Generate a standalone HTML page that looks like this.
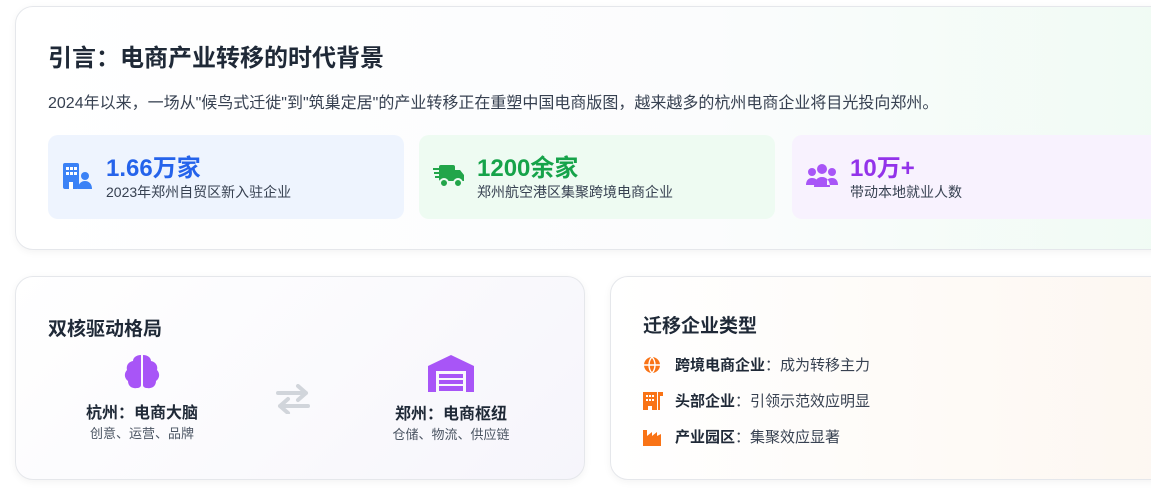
<!DOCTYPE html>
<html><head><meta charset="utf-8"><style>
*{margin:0;padding:0;box-sizing:border-box}
body{width:1151px;height:496px;background:#fff;font-family:"Liberation Sans","Noto Sans CJK SC",sans-serif;color:#1f2937;position:relative;overflow:hidden}
.card{position:absolute;border:1px solid #e5e7eb;border-radius:18px;box-shadow:0 2px 8px rgba(0,0,0,.05)}
.top{left:15px;top:6px;width:1160px;height:244px;background:linear-gradient(90deg,#fff 0%,#fbfcfd 60%,#f0fbf4 100%)}
h1{position:absolute;left:32px;top:31px;font-size:24px;font-weight:bold;color:#1f2937}
.sub{position:absolute;left:32px;top:82px;font-size:16px;color:#374151;white-space:nowrap}
.stat{position:absolute;top:128px;height:84px;width:356px;border-radius:10px}
.stat .ic{position:absolute;left:14px;top:28px}
.stat .n{position:absolute;left:58px;top:13px;font-size:24px;font-weight:bold}
.stat .d{position:absolute;left:58px;top:47px;font-size:14px;color:#374151}
.bl{left:15px;top:276px;width:570px;height:204px;background:linear-gradient(135deg,#fff,#f6f5fb)}
.br{left:610px;top:276px;width:560px;height:204px;background:linear-gradient(90deg,#fff,#fdf7f1)}
h2{position:absolute;font-size:19px;font-weight:bold;color:#1f2937}
.city{position:absolute;text-align:center;width:200px}
.city b{display:block;font-size:16px;margin-top:3px}
.city span{font-size:13px;color:#4b5563}
.item{position:absolute;left:32px;font-size:15px;color:#374151}
.item b{color:#1f2937}
.item svg{position:absolute;left:0;top:2px}
.item .t{position:absolute;left:32px;white-space:nowrap}
</style></head><body>
<div class="card top">
<h1>引言：电商产业转移的时代背景</h1>
<div class="sub">2024年以来，一场从"候鸟式迁徙"到"筑巢定居"的产业转移正在重塑中国电商版图，越来越多的杭州电商企业将目光投向郑州。</div>
<div class="stat" style="left:32px;background:#eef4fe">
<svg class="ic" width="30" height="26" viewBox="0 0 30 26"><rect x="1" y="0" width="16" height="26" rx="2" fill="#3b82f6"/><g fill="#fff"><rect x="4" y="4" width="3" height="3"/><rect x="8" y="4" width="3" height="3"/><rect x="12" y="4" width="3" height="3"/><rect x="4" y="9" width="3" height="3"/><rect x="8" y="9" width="3" height="3"/><rect x="12" y="9" width="3" height="3"/><rect x="7" y="19" width="4" height="7"/></g><circle cx="23" cy="13" r="4" fill="#3b82f6"/><path d="M16 26c0-5 3-8 7-8s7 3 7 8z" fill="#3b82f6"/></svg>
<div class="n" style="color:#2563eb">1.66万家</div><div class="d">2023年郑州自贸区新入驻企业</div></div>
<div class="stat" style="left:403px;background:#eefbf2">
<svg class="ic" width="32" height="26" viewBox="0 0 32 26"><rect x="6" y="2" width="16" height="16" rx="2" fill="#22a54a"/><path d="M22 7h5l4 5v6h-9z" fill="#22a54a"/><circle cx="11" cy="20" r="4" fill="#22a54a" stroke="#eefbf2" stroke-width="2"/><circle cx="25" cy="20" r="4" fill="#22a54a" stroke="#eefbf2" stroke-width="2"/><g stroke="#22a54a" stroke-width="2"><path d="M0 6h8M1 10h7M2 14h6"/></g></svg>
<div class="n" style="color:#16a34a">1200余家</div><div class="d">郑州航空港区集聚跨境电商企业</div></div>
<div class="stat" style="left:776px;background:#f8f2fe;width:380px">
<svg class="ic" width="32" height="24" viewBox="0 0 32 24"><circle cx="16" cy="6" r="5" fill="#a855f7"/><circle cx="6" cy="9" r="4" fill="#a855f7"/><circle cx="26" cy="9" r="4" fill="#a855f7"/><path d="M8 24c0-6 3-10 8-10s8 4 8 10z M0 22c0-4 2-7 6-7s5 2 5 4v3z M32 22c0-4-2-7-6-7s-5 2-5 4v3z" fill="#a855f7"/></svg>
<div class="n" style="color:#9333ea">10万+</div><div class="d">带动本地就业人数</div></div>
</div>
<div class="card bl">
<h2 style="left:32px;top:37px">双核驱动格局</h2>
<div class="city" style="left:26px;top:76px"><svg width="38" height="38" viewBox="0 0 38 38"><path d="M18 2c-5 0-8 3-8 6-5 1-7 5-6 9-3 3-3 8 1 11 0 5 4 8 9 7 2 0 4-1 4-3z" fill="#a855f7"/><path d="M20 2c5 0 8 3 8 6 5 1 7 5 6 9 3 3 3 8-1 11 0 5-4 8-9 7-2 0-4-1-4-3z" fill="#a855f7"/></svg><b>杭州：电商大脑</b><span>创意、运营、品牌</span></div>
<svg style="position:absolute;left:260px;top:107px" width="34" height="30" viewBox="0 0 34 30"><g stroke="#d1d5db" stroke-width="4" fill="none" stroke-linecap="round" stroke-linejoin="round"><path d="M2 9h28M22 2l8 7-8 7"/><path d="M32 22H4M12 15l-8 7 8 7"/></g></svg>
<div class="city" style="left:335px;top:77px"><svg width="46" height="38" viewBox="0 0 46 38"><path d="M0 12L23 1l23 11v26H38V17H8v21H0z" fill="#a855f7"/><g fill="#a855f7"><rect x="11" y="20" width="24" height="4"/><rect x="11" y="26" width="24" height="4"/><rect x="11" y="32" width="24" height="5"/></g></svg><b>郑州：电商枢纽</b><span>仓储、物流、供应链</span></div>
</div>
<div class="card br">
<h2 style="left:32px;top:34px">迁移企业类型</h2>
<div class="item" style="top:77px"><svg width="18" height="18" viewBox="0 0 18 18"><circle cx="9" cy="9" r="8" fill="#f97316"/><path d="M1 9h16M9 1c-4 4-4 12 0 16M9 1c4 4 4 12 0 16" stroke="#fff" stroke-width="1.4" fill="none"/></svg><span class="t"><b>跨境电商企业</b>：成为转移主力</span></div>
<div class="item" style="top:113px"><svg width="20" height="18" viewBox="0 0 20 18"><path d="M0 0h14v18H9v-4H5v4H0z" fill="#f97316"/><g fill="#fff"><rect x="3" y="3" width="2" height="2"/><rect x="6" y="3" width="2" height="2"/><rect x="9" y="3" width="2" height="2"/><rect x="3" y="7" width="2" height="2"/><rect x="6" y="7" width="2" height="2"/><rect x="9" y="7" width="2" height="2"/></g><path d="M15 0h5v4h-3v14h-2z" fill="#f97316"/></svg><span class="t"><b>头部企业</b>：引领示范效应明显</span></div>
<div class="item" style="top:149px"><svg width="18" height="18" viewBox="0 0 18 18"><path d="M0 2h4v6l5-4v4l5-4v4l4-2v12H0z" fill="#f97316"/></svg><span class="t"><b>产业园区</b>：集聚效应显著</span></div>
</div>
</body></html>
